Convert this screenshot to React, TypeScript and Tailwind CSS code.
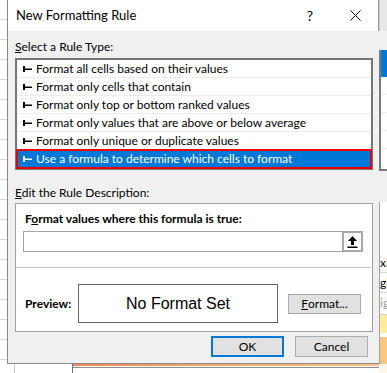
import React from "react";

const rules = [
  "Format all cells based on their values",
  "Format only cells that contain",
  "Format only top or bottom ranked values",
  "Format only values that are above or below average",
  "Format only unique or duplicate values",
  "Use a formula to determine which cells to format",
];

function RuleIcon({ light }: { light?: boolean }) {
  return (
    <svg width="9" height="6" viewBox="0 0 9 6" className={light ? "fill-white" : "fill-black"}>
      <rect x="0" y="0" width="2" height="6" />
      <rect x="2" y="2.5" width="7" height="1.5" />
    </svg>
  );
}

function CollapseIcon() {
  return (
    <svg width="11" height="12" viewBox="0 0 11 12" className="fill-black">
      <path d="M5.5 0 L10 5 L7 5 L7 9 L4 9 L4 5 L1 5 Z" />
      <rect x="0.5" y="10.5" width="10" height="1.5" />
    </svg>
  );
}

export default function App() {
  return (
    <div className="w-[387px] h-[373px] bg-white overflow-hidden flex flex-col font-['Lato',sans-serif] text-black">
      <div className="flex h-[364px]">
        {/* sheet behind, left */}
        <div className="w-[7px] flex flex-col">
          {Array.from({ length: 19 }).map((_, i) => (
            <div key={i} className="h-[20px] shrink-0 border-b border-[#d9d9d9]" />
          ))}
        </div>

        {/* dialog */}
        <div className="w-[372px] flex flex-col border-l border-b border-[#8a8a8a]">
          <div className="h-[31px] bg-white flex items-center pl-[8px] border-r border-[#9a9a9a]">
            <span className="text-[13px]">New Formatting Rule</span>
            <div className="ml-auto flex h-full">
              <div className="w-[46px] flex items-center justify-center text-[14px]">?</div>
              <div className="w-[45px] flex items-center justify-center">
                <svg width="11" height="11" viewBox="0 0 11 11" className="stroke-black">
                  <path d="M0.5 0.5 L10.5 10.5 M10.5 0.5 L0.5 10.5" strokeWidth="1" />
                </svg>
              </div>
            </div>
          </div>

          <div className="flex-1 bg-[#f0f0f0] flex flex-col pl-[7px] pr-[6px] pt-[8px] text-[12px]">
            <div className="h-[16px] leading-[16px]">
              <span className="underline">S</span>elect a Rule Type:
            </div>

            <div className="mt-[3px] border-2 border-[#767676] bg-white flex flex-col">
              {rules.map((r, i) => {
                const sel = i === rules.length - 1;
                return (
                  <div
                    key={r}
                    className={
                      sel
                        ? "h-[18px] flex items-center gap-[4px] pl-[6px] bg-[#0078d7] text-white outline-2 outline-[#ee0000] -outline-offset-1"
                        : "h-[18px] flex items-center gap-[4px] pl-[6px] border-b border-[#ececec]"
                    }
                  >
                    <RuleIcon light={sel} />
                    <span className="leading-[18px]">{r}</span>
                  </div>
                );
              })}
            </div>

            <div className="mt-[15px] h-[16px] leading-[16px]">
              <span className="underline">E</span>dit the Rule Description:
            </div>

            <div className="mt-[2px] h-[129px] border border-[#a0a0a0] bg-white flex flex-col">
              <div className="mt-[7px] pl-[9px] h-[16px] leading-[16px] font-bold">
                F<span className="underline">o</span>rmat values where this formula is true:
              </div>
              <div className="mt-[4px] ml-[7px] mr-[9px] h-[21px] border border-[#a5a5a5] flex">
                <div className="flex-1" />
                <div className="w-[21px] -my-px -mr-px border-2 border-[#a8a8a8] bg-white flex items-center justify-center">
                  <CollapseIcon />
                </div>
              </div>
              <div className="mt-[15px] mr-[1px] h-px bg-[#c4c4c4]" />
              <div className="mt-[16px] pl-[9px] flex items-center">
                <span className="w-[53px] font-bold">Preview:</span>
                <div className="w-[200px] h-[39px] border border-[#646464] flex items-center justify-center font-['Liberation_Sans',sans-serif] text-[16px]">
                  No Format Set
                </div>
                <button className="ml-[10px] w-[73px] h-[20px] bg-[#e1e1e1] border border-[#adadad] flex items-center justify-center">
                  <span className="underline">F</span>ormat...
                </button>
              </div>
            </div>

            <div className="mt-[4px] flex justify-end gap-[11px] pr-[5px]">
              <button className="w-[73px] h-[21px] bg-[#e1e1e1] border-2 border-[#0078d7] flex items-center justify-center">
                OK
              </button>
              <button className="w-[73px] h-[21px] bg-[#e1e1e1] border border-[#adadad] flex items-center justify-center">
                Cancel
              </button>
            </div>
          </div>
        </div>

        {/* dialog / sheet behind, right */}
        <div className="w-[8px] flex flex-col bg-[#f0f0f0] overflow-hidden text-[12px]">
          <div className="h-[31px] shrink-0 bg-[#e8e8e8] border-l border-[#c8c8c8]" />
          <div className="h-[19px] shrink-0" />
          <div className="h-[121px] shrink-0 border-l-2 border-b-2 border-[#7a7a7a] bg-white flex flex-col">
            <div className="h-[27px] shrink-0 bg-[#0078d7]" />
            <div className="h-[18px] shrink-0 border-b border-[#ececec]" />
            <div className="h-[18px] shrink-0 border-b border-[#ececec]" />
            <div className="h-[18px] shrink-0 border-b border-[#ececec]" />
            <div className="h-[18px] shrink-0 border-b border-[#ececec]" />
          </div>
          <div className="h-[31px] shrink-0" />
          <div className="flex-1 bg-white border-l border-[#a0a0a0] flex flex-col leading-[20px]">
            <div className="h-[51px] shrink-0" />
            <div className="h-[20px] shrink-0 border-b border-[#d4d4d4] whitespace-nowrap">xi</div>
            <div className="h-[20px] shrink-0 border-b border-[#d4d4d4] whitespace-nowrap">gh</div>
            <div className="h-[22px] shrink-0 border-b border-[#d4d4d4] whitespace-nowrap text-[#9a9a9a]">ig</div>
            <div className="h-[18px] shrink-0 bg-[#ffeb9c]" />
            <div className="h-[4px] shrink-0" />
            <div className="flex-1 bg-[#f9c77f]" />
          </div>
        </div>
      </div>

      {/* sheet below dialog */}
      <div className="flex-1 flex">
        <div className="w-[14px]" />
        <div className="w-[58px] border-l border-[#c8c8c8]" />
        <div className="w-[307px] border-l border-[#707070] flex flex-col">
          <div className="h-[2px] bg-gradient-to-r from-[#ee8a5a] to-[#f8c482]" />
          <div className="h-[1px] mt-[1px] bg-[#909090]" />
        </div>
        <div className="flex-1 bg-[#fdf6e8]" />
      </div>
    </div>
  );
}
